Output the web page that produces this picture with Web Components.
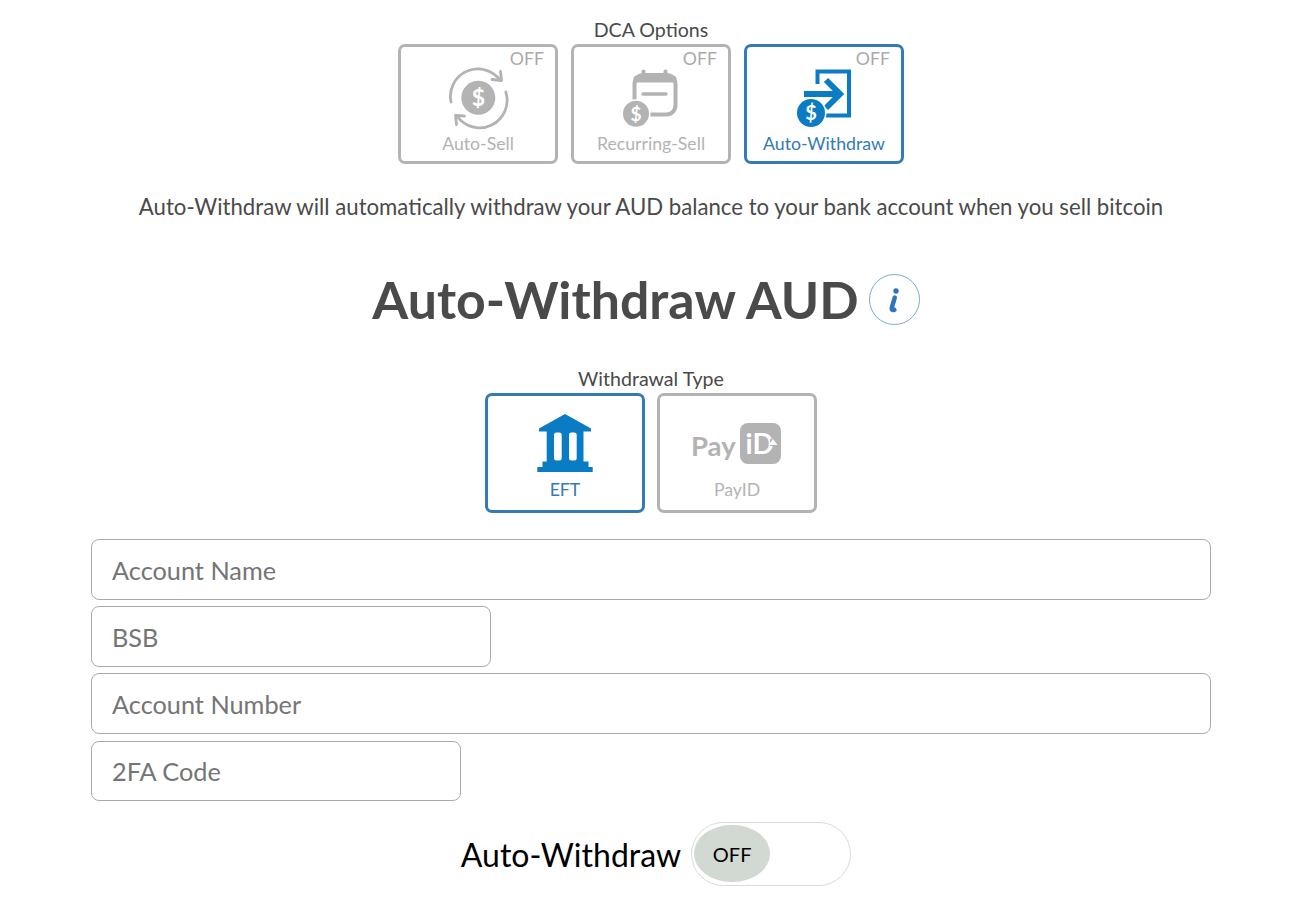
<!DOCTYPE html>
<html lang="en">

<head>
    <meta charset="UTF-8">
    <meta name="viewport" content="width=device-width, initial-scale=1.0">
    <title>Auto-Withdraw AUD</title>
    <style>
        html, body { margin: 0; background: #fff; }
        body { width: 1302px; font-family: Lato, "Liberation Sans", sans-serif; color: #4a4a4a; }
    </style>
    <script>
        // tile used for both the DCA options and the withdrawal types
        const tileTemplate = document.createElement('template');
        tileTemplate.innerHTML = `
            <style>
                :host {
                    display: flex;
                    flex-direction: column;
                    align-items: center;
                    position: relative;
                    box-sizing: border-box;
                    width: 160px;
                    height: 120px;
                    border: 3px solid #b3b3b3;
                    border-radius: 7px;
                    color: #b3b3b3;
                    background: #fff;
                    cursor: pointer;
                }
                :host([active]) {
                    border-color: #337ab7;
                    color: #337ab7;
                }
                .status {
                    position: absolute;
                    top: 1px;
                    right: 11px;
                    font-size: 17.7px;
                    line-height: 22px;
                    color: #aaa;
                }
                .icon {
                    height: 64px;
                    margin-top: var(--icon-top, 19px);
                    display: flex;
                    justify-content: center;
                }
                .label {
                    margin-top: var(--label-gap, 3px);
                    font-size: 17.7px;
                    line-height: 22px;
                    white-space: nowrap;
                }
            </style>
            <span class="status"></span>
            <div class="icon"><slot></slot></div>
            <div class="label"></div>`;

        class OptionTile extends HTMLElement {
            constructor() {
                super();
                this.attachShadow({ mode: 'open' });
                this.shadowRoot.appendChild(tileTemplate.content.cloneNode(true));
            }
            static get observedAttributes() { return ['label', 'status']; }
            attributeChangedCallback(name, oldVal, newVal) {
                if (name === 'label') this.shadowRoot.querySelector('.label').textContent = newVal;
                if (name === 'status') this.shadowRoot.querySelector('.status').textContent = newVal;
            }
        }

        const groupTemplate = document.createElement('template');
        groupTemplate.innerHTML = `
            <style>
                :host { display: block; text-align: center; }
                .title { font-size: 19.6px; line-height: 24px; color: #4a4a4a; }
                .row { display: flex; justify-content: center; gap: var(--tile-gap, 13px); margin-top: 2px; }
            </style>
            <div class="title"></div>
            <div class="row"><slot></slot></div>`;

        class TileGroup extends HTMLElement {
            constructor() {
                super();
                this.attachShadow({ mode: 'open' });
                this.shadowRoot.appendChild(groupTemplate.content.cloneNode(true));
                this.shadowRoot.querySelector('.title').textContent = this.getAttribute('title-text');
            }
        }

        const fieldTemplate = document.createElement('template');
        fieldTemplate.innerHTML = `
            <style>
                :host {
                    display: flex;
                    align-items: center;
                    box-sizing: border-box;
                    height: 61px;
                    padding: 0 20px;
                    border: 1px solid #aaa;
                    border-radius: 8px;
                    font-size: 25.3px;
                    color: #757575;
                    background: #fff;
                }
            </style>
            <slot></slot>`;

        class TextField extends HTMLElement {
            constructor() {
                super();
                this.attachShadow({ mode: 'open' });
                this.shadowRoot.appendChild(fieldTemplate.content.cloneNode(true));
            }
        }

        const infoTemplate = document.createElement('template');
        infoTemplate.innerHTML = `
            <style>
                :host {
                    display: inline-flex;
                    align-items: center;
                    justify-content: center;
                    box-sizing: border-box;
                    width: 51px;
                    height: 51px;
                    border: 1px solid #7aa7dc;
                    border-radius: 50%;
                    background: #fff;
                }
                svg { margin: 4px 1px 0 0; }
            </style>
            <svg width="16" height="26" viewBox="0 0 16 26">
                <circle cx="10" cy="3" r="2.7" fill="#2f74bd"/>
                <path d="M8.8 9.5 L5.8 19.5 Q5 22.8 8.4 21.8" fill="none" stroke="#2f74bd" stroke-width="4.4" stroke-linecap="round"/>
            </svg>`;

        class InfoButton extends HTMLElement {
            constructor() {
                super();
                this.attachShadow({ mode: 'open' });
                this.shadowRoot.appendChild(infoTemplate.content.cloneNode(true));
            }
        }

        const toggleTemplate = document.createElement('template');
        toggleTemplate.innerHTML = `
            <style>
                :host {
                    display: flex;
                    justify-content: center;
                    align-items: center;
                    gap: 10px;
                    padding-left: 10px;
                    font-size: 32px;
                    color: #000;
                }
                .track {
                    box-sizing: border-box;
                    width: 160px;
                    height: 64px;
                    padding: 2px;
                    border: 1px solid #d8dcd8;
                    border-radius: 32px;
                    background: #fff;
                }
                .knob {
                    display: flex;
                    align-items: center;
                    justify-content: center;
                    width: 76px;
                    height: 57px;
                    border-radius: 38px / 29px;
                    background: #d2d8d2;
                    font-size: 20px;
                }
            </style>
            <span><slot></slot></span>
            <div class="track"><div class="knob">OFF</div></div>`;

        class ToggleSwitch extends HTMLElement {
            constructor() {
                super();
                this.attachShadow({ mode: 'open' });
                this.shadowRoot.appendChild(toggleTemplate.content.cloneNode(true));
            }
        }

        const pageTemplate = document.createElement('template');
        pageTemplate.innerHTML = `
            <style>
                :host { display: block; padding-top: 18px; }
                .intro {
                    margin-top: 29px;
                    text-align: center;
                    font-size: 22.2px;
                    line-height: 28px;
                    color: #4a4a4a;
                }
                .heading {
                    display: flex;
                    justify-content: center;
                    align-items: center;
                    gap: 10px;
                    margin-top: 43px;
                    padding-right: 10px;
                    height: 70px;
                }
                h1 {
                    margin: 0;
                    font-size: 51.8px;
                    line-height: 70px;
                    font-weight: 700;
                    color: #4a4a4a;
                }
                .types { margin-top: 33px; --tile-gap: 12px; --icon-top: 18px; --label-gap: 1px; }
                .fields {
                    display: flex;
                    flex-direction: column;
                    gap: 6px;
                    width: 1120px;
                    margin: 26px auto 0;
                }
                .bsb { width: 400px; }
                .code { width: 370px; height: 60px; margin-top: 1px; }
                .toggle { margin-top: 21px; }
            </style>
            <tile-group title-text="DCA Options">
                <option-tile label="Auto-Sell" status="OFF">
                    <svg width="64" height="64" viewBox="0 0 64 64">
                        <g fill="none" stroke="#b3b3b3" stroke-width="2.8" stroke-linecap="round" stroke-linejoin="round">
                            <path d="M5 36 A27.5 27.5 0 0 1 54 14"/>
                            <path d="M46 13.5 L55.5 14.5 L54.5 5.5"/>
                            <path d="M59.8 26 A27.5 27.5 0 0 1 11 50"/>
                            <path d="M18.5 50 L9.5 49.5 L10.5 58.5"/>
                        </g>
                        <circle cx="32.3" cy="31.7" r="17" fill="#b3b3b3"/>
                        <text x="32.3" y="40" text-anchor="middle" font-family="Lato" font-weight="700" font-size="23" fill="#fff">$</text>
                    </svg>
                </option-tile>
                <option-tile label="Recurring-Sell" status="OFF">
                    <svg width="64" height="64" viewBox="0 0 64 64">
                        <g fill="none" stroke="#b3b3b3" stroke-width="4" stroke-linecap="round">
                            <rect x="15.5" y="9" width="41" height="39.5" rx="9"/>
                            <path d="M18 13 H54" stroke-width="7"/>
                            <path d="M24.5 5.5 V8 M46.5 5.5 V8"/>
                            <path d="M24 28 H47" stroke-width="3.4"/>
                        </g>
                        <circle cx="17" cy="47.7" r="14.5" fill="#fff"/>
                        <circle cx="17" cy="47.7" r="13" fill="#b3b3b3"/>
                        <text x="17" y="54.5" text-anchor="middle" font-family="Lato" font-weight="700" font-size="19" fill="#fff">$</text>
                    </svg>
                </option-tile>
                <option-tile label="Auto-Withdraw" status="OFF" active>
                    <svg width="64" height="64" viewBox="0 0 64 64">
                        <g fill="none" stroke="#0a7cc4" stroke-linecap="butt">
                            <path d="M25.5 18 V5.5 H57 V49.5 H32" stroke-width="4"/>
                            <path d="M12 28 H46" stroke-width="6"/>
                            <path d="M34 14 L48 28 L34 42" stroke-width="6"/>
                        </g>
                        <circle cx="19" cy="47" r="15.5" fill="#fff"/>
                        <circle cx="19" cy="47" r="14" fill="#0a7cc4"/>
                        <text x="19" y="54" text-anchor="middle" font-family="Lato" font-weight="700" font-size="20" fill="#fff">$</text>
                    </svg>
                </option-tile>
            </tile-group>
            <div class="intro">Auto-Withdraw will automatically withdraw your AUD balance to your bank account when you sell bitcoin</div>
            <div class="heading">
                <h1>Auto-Withdraw AUD</h1>
                <info-button></info-button>
            </div>
            <tile-group class="types" title-text="Withdrawal Type">
                <option-tile label="EFT" active>
                    <svg width="64" height="64" viewBox="0 0 64 64">
                        <path fill="#0a7cc4" fill-rule="evenodd" d="M32 0 L58 14.5 V17.5 H50.5 V47.5 H55.5 V53 H59.7 V58 H4.3 V53 H9.5 V47.5 H13.7 V17.5 H6 V14.5 Z M23.5 18.5 Q21 18.5 21 21 V44 Q21 46.5 23.5 46.5 H26.2 Q28.7 46.5 28.7 44 V21 Q28.7 18.5 26.2 18.5 Z M38.5 18.5 Q36 18.5 36 21 V44 Q36 46.5 38.5 46.5 H41.2 Q43.7 46.5 43.7 44 V21 Q43.7 18.5 41.2 18.5 Z"/>
                    </svg>
                </option-tile>
                <option-tile label="PayID">
                    <svg width="94" height="64" viewBox="0 0 94 64">
                        <text x="1" y="42" font-family="Lato" font-weight="700" font-size="27.5" fill="#b3b3b3">Pay</text>
                        <rect x="50" y="9" width="41" height="41" rx="8" fill="#b3b3b3"/>
                        <text x="55.5" y="40" font-family="Lato" font-weight="700" font-size="28" fill="#fff">iD</text>
                        <rect x="80" y="25" width="7" height="7" fill="#b3b3b3"/>
                        <path d="M78.5 31 H87.5 L83 25 Z" fill="#fff"/>
                    </svg>
                </option-tile>
            </tile-group>
            <div class="fields">
                <text-field>Account Name</text-field>
                <text-field class="bsb">BSB</text-field>
                <text-field>Account Number</text-field>
                <text-field class="code">2FA Code</text-field>
            </div>
            <toggle-switch class="toggle">Auto-Withdraw</toggle-switch>`;

        class WithdrawPage extends HTMLElement {
            constructor() {
                super();
                this.attachShadow({ mode: 'open' });
                this.shadowRoot.appendChild(pageTemplate.content.cloneNode(true));
            }
        }

        window.customElements.define('option-tile', OptionTile);
        window.customElements.define('tile-group', TileGroup);
        window.customElements.define('text-field', TextField);
        window.customElements.define('info-button', InfoButton);
        window.customElements.define('toggle-switch', ToggleSwitch);
        window.customElements.define('withdraw-page', WithdrawPage);
    </script>
</head>

<body>
    <withdraw-page></withdraw-page>
</body>

</html>
